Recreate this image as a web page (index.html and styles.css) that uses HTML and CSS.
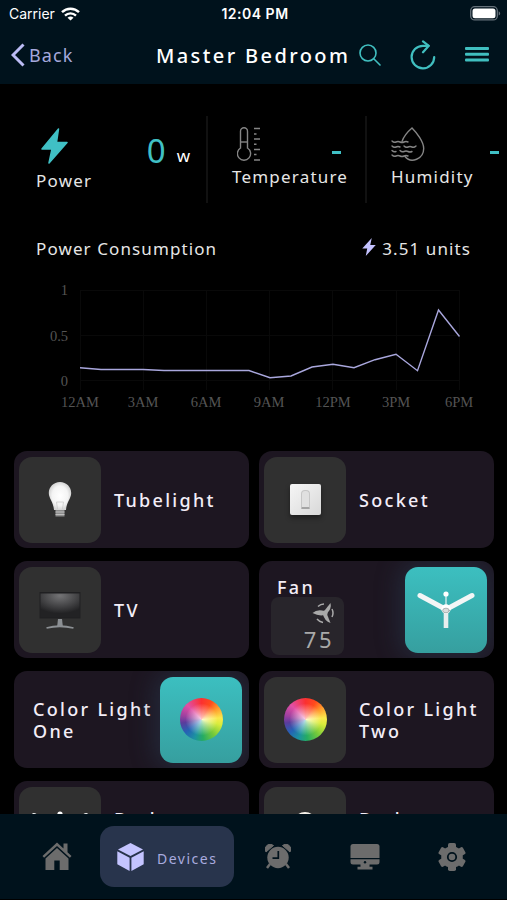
FILE: index.html
```
<!DOCTYPE html>
<html lang="en">
<head>
    <meta charset="UTF-8">
    <meta name="viewport" content="width=device-width, initial-scale=1.0">
    <title>Master Bedroom</title>
    <link rel="stylesheet" href="styles.css">
</head>
<body>
    <div class="app">
        <header class="header">
            <div class="status">
                <div class="carrier">
                    <span>Carrier</span>
                    <svg width="19" height="14" viewBox="0 0 19 14" fill="none" stroke="#fff" stroke-width="2.4">
                        <path d="M1 5.2a12.2 12.2 0 0 1 17 0"/>
                        <path d="M4 8.6a8 8 0 0 1 11 0"/>
                        <path d="M9.500 13.600L6.500 10.800a4.400 4.400 0 0 1 6 0z" fill="#fff" stroke="none"/>
                    </svg>
                </div>
                <span class="clock">12:04 PM</span>
                <svg class="battery" width="31" height="15" viewBox="0 0 31 15">
                    <rect x=".7" y=".7" width="26.600" height="13.200" rx="4" fill="none" stroke="#65717a" stroke-width="1.300"/>
                    <rect x="2.500" y="2.400" width="23" height="9.800" rx="2.500" fill="#fff"/>
                    <path d="M28.700 5.200c2 .8 2 3.600 0 4.400z" fill="#65717a"/>
                </svg>
            </div>
            <div class="navbar">
                <a class="back">
                    <svg width="14" height="24" viewBox="0 0 14 24" fill="none" stroke="#bcbcf5" stroke-width="3"><path d="M12.500 1.500L2 12l10.500 10.500"/></svg>
                    <span>Back</span>
                </a>
                <h1 class="title">Master Bedroom</h1>
                <div class="actions">
                    <svg width="22" height="22" viewBox="0 0 22 22" fill="none" stroke="#40bfc0" stroke-width="1.600" stroke-linecap="round"><circle cx="9" cy="9" r="8"/><path d="M15 15l6 6"/></svg>
                    <svg width="26" height="30" viewBox="0 0 26 30" fill="none" stroke="#40bfc0" stroke-width="2.200" stroke-linecap="round" stroke-linejoin="round"><path d="M24.200 17A11.300 11.300 0 1 1 13 5.800h5.500"/><path d="M13 1.300l5.800 4.500L13 12.300"/></svg>
                    <svg width="24" height="16" viewBox="0 0 24 16" fill="#40bfc0"><rect y="0" width="24" height="3" rx="1"/><rect y="5.700" width="24" height="3" rx="1"/><rect y="11.500" width="24" height="3" rx="1"/></svg>
                </div>
            </div>
        </header>

        <main class="content">
            <section class="stats">
                <div class="stat stat-power">
                    <div class="reading">
                        <svg class="bolt" width="27" height="36" viewBox="0 0 27 36" fill="#40c0c5" stroke="#40c0c5" stroke-width="1.500" stroke-linejoin="round"><path d="M17.500 1L1 21h10L8 35l18-20.500H15.500z"/></svg>
                        <span class="value">0</span>
                        <span class="unit">w</span>
                    </div>
                    <div class="label">Power</div>
                </div>
                <div class="stat stat-temp">
                    <div class="reading">
                        <svg width="24" height="35" viewBox="0 0 24 35" fill="none" stroke="#858585" stroke-width="1.400">
                            <path d="M3.500 21V4.200a3.500 3.500 0 0 1 7 0V21a6.600 6.600 0 1 1-7 0z"/>
                            <path d="M3.500 15h7"/>
                            <path d="M17 1.500h6M17 12h6M17 22.500h6M17 33h6M17 7h2.500M17 17.300h2.500M17 27.500h2.500" stroke-width="1.600"/>
                        </svg>
                        <span class="dash"></span>
                    </div>
                    <div class="label">Temperature</div>
                </div>
                <div class="stat stat-hum">
                    <div class="reading">
                        <svg width="35" height="35" viewBox="0 0 35 35" fill="none" stroke="#858585" stroke-width="1.400" stroke-linecap="round">
                            <path d="M11 14.500C12.500 10 17.500 4 21 1C26 6 32.700 15 32.700 21.500C32.700 32 20 37 14 29.500"/>
                            <path d="M1 14q2 2 4 1t4 0 4 0 4 0"/>
                            <path d="M1 19q2 2 4 1t4 0M13 19q2 2 4 1t4 0 4-1"/>
                            <path d="M1 23.500q2 2 4 1M9 23.500q2 2 4 1t4 0 4 0"/>
                            <path d="M1 28q2 2 4 1t4 0 4 0 4 0"/>
                        </svg>
                        <span class="dash"></span>
                    </div>
                    <div class="label">Humidity</div>
                </div>
            </section>

            <section class="usage">
                <div class="usage-head">
                    <h2>Power Consumption</h2>
                    <div class="total">
                        <svg width="14" height="18" viewBox="0 0 27 36" fill="#c4c2ff"><path d="M19 0L0 21h10L7 36l20-22H16z"/></svg>
                        <span>3.51 units</span>
                    </div>
                </div>
                <svg class="chart" width="467" height="140" viewBox="20 280 467 140">
                    <path class="grid" d="M80 290.500H460M80 335.500H460M80 380.500H460M80.500 291V390M143.500 291V390M206.500 291V390M269.500 291V390M332.500 291V390M396.500 291V390M459.500 291V390"/>
                    <polyline class="line" points="80,367.700 101,369.500 122,369.500 143,369.500 164,370.500 185,370.500 206,370.500 228,370.500 249,370.500 270,377.700 291,376 312,367 333,364.200 354,367.700 375,359.700 396,354.300 417.500,370.700 438.500,310 459.500,336.500"/>
                    <g class="axis" text-anchor="end">
                        <text x="68" y="295">1</text>
                        <text x="68" y="340.500">0.5</text>
                        <text x="68" y="385.500">0</text>
                    </g>
                    <g class="axis" text-anchor="middle">
                        <text x="80" y="406.500">12AM</text>
                        <text x="143" y="406.500">3AM</text>
                        <text x="206" y="406.500">6AM</text>
                        <text x="269" y="406.500">9AM</text>
                        <text x="333" y="406.500">12PM</text>
                        <text x="396" y="406.500">3PM</text>
                        <text x="459" y="406.500">6PM</text>
                    </g>
                </svg>
            </section>

            <section class="devices">
                <div class="card">
                    <div class="tile">
                        <svg width="24" height="38" viewBox="0 0 24 38">
                            <defs><radialGradient id="glass"><stop offset="0" stop-color="#fff"/><stop offset=".7" stop-color="#f4f4f4"/><stop offset="1" stop-color="#d5d5d5"/></radialGradient></defs>
                            <path d="M12 1C5.500 1 .8 6 .8 12c0 5.500 4.700 9 5.200 17h12c.5-8 5.200-11.500 5.200-17C23.200 6 18.500 1 12 1z" fill="url(#glass)"/>
                            <path d="M9.500 28l-1-7h7l-1 7" fill="none" stroke="#ccc" stroke-width=".8"/>
                            <path d="M7.500 29h9v6.500h-9z" fill="#8b8b8b"/>
                            <path d="M7.500 31h9M7.500 33.500h9" stroke="#ccc" stroke-width=".8"/>
                        </svg>
                    </div>
                    <div class="name">Tubelight</div>
                </div>
                <div class="card">
                    <div class="tile">
                        <div class="socket"><span class="switch"></span></div>
                    </div>
                    <div class="name">Socket</div>
                </div>
                <div class="card">
                    <div class="tile">
                        <svg width="42" height="38" viewBox="0 0 42 38">
                            <defs><radialGradient id="screen" cx=".5" cy=".1" r=".75"><stop offset="0" stop-color="#747476"/><stop offset=".5" stop-color="#4b4b4d"/><stop offset="1" stop-color="#222224"/></radialGradient></defs>
                            <rect x=".5" y="1" width="41" height="26.500" fill="#202022"/>
                            <rect x="1.500" y="2.500" width="39" height="23.500" fill="url(#screen)"/>
                            <path d="M19 28h4l.8 7h-5.600z" fill="#8c9094"/>
                            <path d="M7.500 37q13-3.500 27 0" fill="none" stroke="#8c9094" stroke-width="1.800"/>
                        </svg>
                    </div>
                    <div class="name">TV</div>
                </div>
                <div class="card on">
                    <div class="fan-info">
                        <div class="name">Fan</div>
                        <div class="speed">
                            <svg width="22" height="22" viewBox="0 0 22 22" fill="#a9a9a9">
                                <path d="M11 10.500L18.500 1q1.500 5.500-4 11z"/>
                                <path d="M14.500 11l4 10q-6-2-7.500-8.500z"/>
                                <path d="M12.500 9Q5 7 .5 11q6.500 3.500 12 2z"/>
                                <circle cx="13" cy="11" r="2.600"/>
                                <path d="M20 7q2 4 0 8M6 4.500q2.500-2.500 6-2.500M5 17q2 2.500 6 3.500" fill="none" stroke="#a9a9a9" stroke-width="1.500"/>
                            </svg>
                            <span>75</span>
                        </div>
                    </div>
                    <div class="tile">
                        <svg width="60" height="40" viewBox="0 0 60 40" stroke-linecap="round">
                            <path d="M30 19V4" stroke="#d9eeee" stroke-width="1.300"/>
                            <circle cx="30" cy="4" r="2.600" fill="#fff"/>
                            <path d="M30 19.500L4 5.500M30 19.500L56 5.500" stroke="#f4f6f6" stroke-width="5"/>
                            <path d="M30 20v18" stroke="#e8eeee" stroke-width="4.600" stroke-linecap="butt"/>
                            <circle cx="30" cy="19" r="4.700" fill="#fff"/>
                            <ellipse cx="30" cy="20.500" rx="3.300" ry="2.300" fill="#ddd" stroke="#9aa5a5" stroke-width=".8"/>
                        </svg>
                    </div>
                </div>
                <div class="card on">
                    <div class="name">Color Light One</div>
                    <div class="tile"><div class="wheel"></div></div>
                </div>
                <div class="card">
                    <div class="tile"><div class="wheel"></div></div>
                    <div class="name">Color Light Two</div>
                </div>
                <div class="card">
                    <div class="tile">
                        <svg width="60" height="40" viewBox="0 0 60 40" stroke-linecap="round">
                            <path d="M30 19V4" stroke="#bbb" stroke-width="1.300"/>
                            <circle cx="30" cy="4" r="2.600" fill="#fff"/>
                            <path d="M30 19.500L4 5.500M30 19.500L56 5.500" stroke="#f4f6f6" stroke-width="5"/>
                            <path d="M30 20v18" stroke="#e8eeee" stroke-width="4.600" stroke-linecap="butt"/>
                        </svg>
                    </div>
                    <div class="name">Bathroom Fan</div>
                </div>
                <div class="card">
                    <div class="tile">
                        <svg width="24" height="38" viewBox="0 0 24 38"><path d="M12 1C5.500 1 .8 6 .8 12c0 5.500 4.700 9 5.200 17h12c.5-8 5.200-11.500 5.200-17C23.200 6 18.500 1 12 1z" fill="#f6f2ea"/></svg>
                    </div>
                    <div class="name">Bathroom Light</div>
                </div>
            </section>
        </main>

        <nav class="tabs">
            <a class="tab">
                <svg width="30" height="29" viewBox="0 0 30 29" fill="#6c6c6c">
                    <path d="M15 .5L.5 14l1.600 1.700L15 4l12.900 11.700 1.600-1.700-4-3.700V1.500h-4v5z"/>
                    <path d="M15 6L3.500 16.500V28h8.800v-9.500h5.400V28h8.800V16.500z"/>
                </svg>
            </a>
            <a class="tab active">
                <svg width="27" height="28" viewBox="0 0 27 28" fill="#c4c4ff"><path d="M13.500 0L26 6.500 13.500 13 1 6.500z"/><path d="M.3 8.200l12.300 6.500V28L.3 21.200zM26.700 8.200L14.400 14.700V28l12.300-6.800z"/></svg>
                <span>Devices</span>
            </a>
            <a class="tab">
                <svg width="26" height="25" viewBox="0 0 26 25" fill="#6c6c6c">
                    <circle cx="13" cy="13.500" r="10.700"/>
                    <path d="M1 8A5 5 0 0 1 8.500 1.500zM25 8A5 5 0 0 0 17.500 1.500z" stroke="#6c6c6c" stroke-width="1" stroke-linejoin="round"/>
                    <path d="M5 20l-3 4M21 20l3 4" stroke="#6c6c6c" stroke-width="2.500"/>
                    <path d="M13.300 7v7.200H7.500" fill="none" stroke="#00121c" stroke-width="1.700"/>
                </svg>
            </a>
            <a class="tab">
                <svg width="30" height="26" viewBox="0 0 30 26" fill="#6c6c6c">
                    <path d="M3 0h24q2.500 0 2.500 2.500V14H.5V2.500Q.5 0 3 0z"/>
                    <path d="M.5 15.300h29V18q0 2.500-2.500 2.500h-7.500v2.300h3V25.500h-15v-2.700h3V20.500H3Q.5 20.500.5 18z"/>
                    <circle cx="15" cy="18.300" r="1.200" fill="#00121c"/>
                </svg>
            </a>
            <a class="tab">
                <svg width="28" height="28" viewBox="0 0 28 28">
                    <g fill="#6c6c6c">
                        <circle cx="14" cy="14" r="10.800"/>
                        <rect x="10" y="0" width="8" height="28" rx="1.800"/>
                        <rect x="10" y="0" width="8" height="28" rx="1.800" transform="rotate(60 14 14)"/>
                        <rect x="10" y="0" width="8" height="28" rx="1.800" transform="rotate(120 14 14)"/>
                    </g>
                    <circle cx="14" cy="14" r="4.200" fill="none" stroke="#00121c" stroke-width="1.800"/>
                </svg>
            </a>
        </nav>
    </div>
</body>
</html>
```
FILE: styles.css
```
* {
    box-sizing: border-box;
}
body {
    margin: 0;
    background: #000;
    color: #fff;
    font-family: "Noto Sans", sans-serif;
}
svg {
    display: block;
    flex: none;
}
h1, h2 {
    margin: 0;
}
.app {
    width: 507px;
    height: 900px;
    display: flex;
    flex-direction: column;
    overflow: hidden;
}

/* header */
.header {
    height: 84px;
    flex: none;
    background: #00121c;
}
.status {
    height: 27px;
    padding: 0 6px 0 9px;
    display: grid;
    grid-template-columns: 1fr auto 1fr;
    align-items: center;
    font-family: Inter, sans-serif;
    font-size: 14px;
}
.carrier {
    display: flex;
    gap: 6px;
    align-items: center;
}
.clock {
    font-weight: 600;
    letter-spacing: .5px;
}
.battery {
    justify-self: end;
}
.navbar {
    height: 56px;
    display: flex;
    align-items: center;
    padding: 0 18px 0 11px;
}
.back {
    width: 145px;
    display: flex;
    align-items: center;
    gap: 4px;
    color: #a5a8dc;
    font-size: 18px;
    letter-spacing: 1.1px;
}
.title {
    width: 203px;
    font-size: 20px;
    font-weight: 500;
    letter-spacing: 2.4px;
    white-space: nowrap;
}
.actions {
    flex: 1;
    display: flex;
    align-items: center;
    justify-content: space-between;
}

/* sensors */
.content {
    flex: 1;
    overflow: hidden;
}
.stats {
    display: flex;
    height: 87px;
    margin-top: 32px;
}
.stat {
    flex: none;
    border-right: 2px solid #111;
}
.stat-power {
    width: 208px;
    padding: 12px 16px 0 36px;
}
.stat-temp {
    width: 159px;
    padding: 11px 24px 0 24px;
}
.stat-hum {
    width: 140px;
    padding: 11px 8px 0 24px;
    border: none;
}
.reading {
    display: flex;
    height: 39px;
}
.stat-power .reading {
    height: 42px;
}
.stat-temp .reading {
    padding-left: 5px;
}
.bolt {
    margin: 0 auto 0 5px;
}
.value {
    font-size: 33px;
    line-height: 46px;
    color: #40c0c5;
    width: 30px;
}
.unit {
    font-size: 17px;
    line-height: 56px;
}
.dash {
    width: 9px;
    height: 3px;
    margin: 24px 0 0 auto;
    background: #40c0c5;
}
.label {
    font-size: 17px;
    line-height: 22px;
    letter-spacing: 1.2px;
    color: #e6e6e6;
    white-space: nowrap;
}

/* consumption */
.usage {
    height: 248px;
    padding-top: 35px;
}
.usage-head {
    display: flex;
    justify-content: space-between;
    padding: 0 36px 0 36px;
    height: 42px;
    line-height: 22px;
    font-size: 17px;
    letter-spacing: 1.1px;
    color: #e6e6e6;
}
.usage-head h2 {
    font-size: 17px;
    font-weight: 400;
}
.total {
    display: flex;
    gap: 6px;
}
.chart {
    margin-left: 20px;
}
.grid {
    stroke: #090909;
}
.line {
    fill: none;
    stroke: #a9a7dd;
    stroke-width: 1.4;
}
.axis {
    font-family: "Liberation Serif", serif;
    font-size: 14.5px;
    fill: #545454;
}

/* devices */
.devices {
    display: grid;
    grid-template-columns: 235px 235px;
    grid-auto-rows: 97px;
    gap: 13px 10px;
    padding-left: 14px;
}
.card {
    display: flex;
    align-items: center;
    border-radius: 13px;
    background: #1d1621;
    padding: 0 5px;
    overflow: hidden;
}
.tile {
    flex: none;
    width: 82px;
    height: 86px;
    border-radius: 13px;
    background: #303030;
    display: flex;
    align-items: center;
    justify-content: center;
}
.name {
    flex: 1;
    padding-left: 13px;
    font-size: 18px;
    font-weight: 500;
    line-height: 22px;
    letter-spacing: 2.3px;
    color: #f3edf7;
}
.on .tile {
    background: linear-gradient(#3cbfc0, #369f9f);
    box-shadow: 0 0 24px 5px rgba(45, 66, 90, .45);
    margin-right: 2px;
}
.on > .name {
    padding-left: 14px;
}
.fan-info {
    flex: 1;
    height: 94px;
    padding: 14px 0 0 7px;
}
.fan-info .name {
    padding-left: 6px;
    line-height: 20px;
}
.speed {
    width: 73px;
    height: 58px;
    border-radius: 8px;
    background: #28252b;
    display: flex;
    flex-direction: column;
    align-items: flex-end;
    padding: 5px 10px 0 0;
    color: #a9a9a9;
    font-size: 22px;
    line-height: 31px;
    letter-spacing: 2.5px;
}
.socket {
    width: 31px;
    height: 31px;
    border-radius: 2px;
    background: linear-gradient(135deg, #f6f6f6, #d8d8d8);
    box-shadow: 0 3px 5px rgba(0, 0, 0, .4);
    display: flex;
    align-items: center;
    justify-content: center;
}
.switch {
    width: 9px;
    height: 19px;
    border: 1px solid #c6c6c6;
    border-bottom: 2px solid #a4a4a4;
    border-radius: 4px 4px 1px 1px;
    background: #e0e0e0;
}
.wheel {
    width: 43px;
    height: 43px;
    border-radius: 50%;
    background:
        radial-gradient(circle closest-side, rgba(255, 255, 255, .75), rgba(255, 255, 255, 0) 75%),
        conic-gradient(#fb3030, #ff4b1c 30deg, #ff9a2c 55deg, #fbe94c 85deg, #d9ec3c 105deg, #77ca3a 140deg, #25ac62 175deg, #1c93a0 200deg, #2463b5 230deg, #5b3c9c 260deg, #9a3f9f 280deg, #e14fa5 315deg, #fb3030);
}

/* bottom tabs */
.tabs {
    height: 86px;
    flex: none;
    background: #00121c;
    border-bottom: 1px solid #000;
    display: grid;
    grid-template-columns: 58px 134px 88px 86px 87px;
    padding-left: 27px;
    align-items: center;
}
.tab {
    height: 61px;
    display: flex;
    align-items: center;
    justify-content: center;
}
.tab:first-child {
    width: 60px;
}
.tab.active {
    margin-left: 15px;
    margin-right: -15px;
    justify-content: flex-start;
    gap: 13px;
    padding-left: 17px;
    border-radius: 14px;
    background: #28344c;
    color: #a9abdf;
    font-size: 14px;
    letter-spacing: 1.5px;
}
.tab.active span {
    padding-top: 3px;
}
.tab.active ~ .tab {
    margin-left: 15px;
    margin-right: -15px;
}
```
